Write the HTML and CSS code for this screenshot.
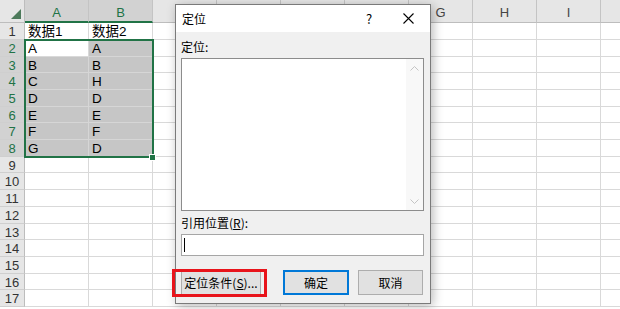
FILE: index.html
```html
<!DOCTYPE html>
<html lang="zh-CN">
<head>
    <meta charset="UTF-8">
    <title>定位</title>
    <link rel="stylesheet" href="styles.css">
</head>
<body>
<div class="wrap">
    <div class="sheet">
        <div class="corner"><span class="tri"></span></div>
        <!-- C-F 被对话框挡住 -->
        <div class="ch on">A</div><div class="ch on">B</div><div class="ch"></div><div class="ch"></div><div class="ch"></div><div class="ch"></div><div class="ch">G</div><div class="ch">H</div><div class="ch">I</div><div class="ch"></div>

        <div class="rh">1</div><div class="c">数据1</div><div class="c">数据2</div><div class="c"></div><div class="c"></div><div class="c"></div><div class="c"></div><div class="c"></div><div class="c"></div><div class="c"></div><div class="c"></div>
        <div class="rh on">2</div><div class="c">A</div><div class="c sel">A</div><div class="c"></div><div class="c"></div><div class="c"></div><div class="c"></div><div class="c"></div><div class="c"></div><div class="c"></div><div class="c"></div>
        <div class="rh on">3</div><div class="c sel">B</div><div class="c sel">B</div><div class="c"></div><div class="c"></div><div class="c"></div><div class="c"></div><div class="c"></div><div class="c"></div><div class="c"></div><div class="c"></div>
        <div class="rh on">4</div><div class="c sel">C</div><div class="c sel">H</div><div class="c"></div><div class="c"></div><div class="c"></div><div class="c"></div><div class="c"></div><div class="c"></div><div class="c"></div><div class="c"></div>
        <div class="rh on">5</div><div class="c sel">D</div><div class="c sel">D</div><div class="c"></div><div class="c"></div><div class="c"></div><div class="c"></div><div class="c"></div><div class="c"></div><div class="c"></div><div class="c"></div>
        <div class="rh on">6</div><div class="c sel">E</div><div class="c sel">E</div><div class="c"></div><div class="c"></div><div class="c"></div><div class="c"></div><div class="c"></div><div class="c"></div><div class="c"></div><div class="c"></div>
        <div class="rh on">7</div><div class="c sel">F</div><div class="c sel">F</div><div class="c"></div><div class="c"></div><div class="c"></div><div class="c"></div><div class="c"></div><div class="c"></div><div class="c"></div><div class="c"></div>
        <div class="rh on">8</div><div class="c sel">G</div><div class="c sel">D</div><div class="c"></div><div class="c"></div><div class="c"></div><div class="c"></div><div class="c"></div><div class="c"></div><div class="c"></div><div class="c"></div>
        <div class="rh">9</div><div class="c"></div><div class="c"></div><div class="c"></div><div class="c"></div><div class="c"></div><div class="c"></div><div class="c"></div><div class="c"></div><div class="c"></div><div class="c"></div>
        <div class="rh">10</div><div class="c"></div><div class="c"></div><div class="c"></div><div class="c"></div><div class="c"></div><div class="c"></div><div class="c"></div><div class="c"></div><div class="c"></div><div class="c"></div>
        <div class="rh">11</div><div class="c"></div><div class="c"></div><div class="c"></div><div class="c"></div><div class="c"></div><div class="c"></div><div class="c"></div><div class="c"></div><div class="c"></div><div class="c"></div>
        <div class="rh">12</div><div class="c"></div><div class="c"></div><div class="c"></div><div class="c"></div><div class="c"></div><div class="c"></div><div class="c"></div><div class="c"></div><div class="c"></div><div class="c"></div>
        <div class="rh">13</div><div class="c"></div><div class="c"></div><div class="c"></div><div class="c"></div><div class="c"></div><div class="c"></div><div class="c"></div><div class="c"></div><div class="c"></div><div class="c"></div>
        <div class="rh">14</div><div class="c"></div><div class="c"></div><div class="c"></div><div class="c"></div><div class="c"></div><div class="c"></div><div class="c"></div><div class="c"></div><div class="c"></div><div class="c"></div>
        <div class="rh">15</div><div class="c"></div><div class="c"></div><div class="c"></div><div class="c"></div><div class="c"></div><div class="c"></div><div class="c"></div><div class="c"></div><div class="c"></div><div class="c"></div>
        <div class="rh">16</div><div class="c"></div><div class="c"></div><div class="c"></div><div class="c"></div><div class="c"></div><div class="c"></div><div class="c"></div><div class="c"></div><div class="c"></div><div class="c"></div>
        <div class="rh">17</div><div class="c"></div><div class="c"></div><div class="c"></div><div class="c"></div><div class="c"></div><div class="c"></div><div class="c"></div><div class="c"></div><div class="c"></div><div class="c"></div>
    </div>

    <!-- 选区边框 -->
    <div class="selection"></div>
    <div class="handle"></div>

    <div class="dialog">
        <div class="title">
            <span class="title-text">定位</span>
            <span class="help">?</span>
            <svg class="close" width="11" height="11" viewBox="0 0 11 11">
                <path d="M0.5 0.5 L10.5 10.5 M10.5 0.5 L0.5 10.5" stroke="#000" stroke-width="1.1" fill="none"/>
            </svg>
        </div>
        <div class="body">
            <div class="label">定位:</div>
            <div class="listbox">
                <div class="scroll">
                    <svg width="9" height="5" viewBox="0 0 9 5"><path d="M0.5 4.5 L4.5 0.5 L8.5 4.5" stroke="#c4c4c4" fill="none"/></svg>
                    <svg width="9" height="5" viewBox="0 0 9 5"><path d="M0.5 0.5 L4.5 4.5 L8.5 0.5" stroke="#c4c4c4" fill="none"/></svg>
                </div>
            </div>
            <div class="label ref">引用位置(<u>R</u>):</div>
            <div class="input"><span class="caret"></span></div>
            <div class="btns">
                <div class="btn btn-cond">定位条件(<u>S</u>)...</div>
                <div class="btn btn-ok">确定</div>
                <div class="btn btn-cancel">取消</div>
            </div>
        </div>
        <div class="mark"></div>
    </div>
</div>
</body>
</html>
```
FILE: styles.css
```css
html,body{
    margin:0;
    padding:0;
    height:100%;
    overflow:hidden;
    background:#fff;
}
.wrap{
    position:relative;
    width:620px;
    height:309px;
    overflow:hidden;
}
.sheet{
    display:grid;
    grid-template-columns:25px repeat(10, 64px);
    grid-template-rows:23.3px;
    grid-auto-rows:16.7px;
    font-family:"Liberation Sans","Noto Sans CJK SC",sans-serif;
    font-size:13.5px;
    color:#000;
}
.sheet > div{
    box-sizing:border-box;
    border-right:1px solid #d9d9d9;
    border-bottom:1px solid #d9d9d9;
    white-space:nowrap;
}
.sheet .corner{
    background:#e6e6e6;
    border-color:#bdbdbd;
    position:relative;
}
.corner .tri{
    position:absolute;
    right:3px;
    bottom:3px;
    width:0;
    height:0;
    border-left:10px solid transparent;
    border-bottom:10px solid #4d7a5b;
}
.sheet .ch{
    background:#e6e6e6;
    border-right-color:#c4c4c4;
    border-bottom-color:#bdbdbd;
    color:#444;
    font-size:13px;
    text-align:center;
    padding-top:4px;
    line-height:18px;
}
.sheet .ch.on{
    background:#d2d2d2;
    color:#217346;
    border-bottom:2px solid #217346;
}
.sheet .rh{
    background:#e6e6e6;
    border-right-color:#bdbdbd;
    border-bottom-color:#cfcfcf;
    color:#333;
    font-size:13px;
    text-align:center;
    padding-top:1px;
    line-height:15.5px;
}
.sheet .rh.on{
    background:#d2d2d2;
    color:#217346;
}
.sheet .c{
    padding-left:3px;
    padding-top:1px;
    line-height:15.5px;
}
.sheet .c.sel{
    background:#c6c6c6;
    border-color:#d6d6d6;
}
.selection{
    position:absolute;
    left:24px;
    top:39px;
    width:130px;
    height:119px;
    box-sizing:border-box;
    border:2px solid #217346;
}
.handle{
    position:absolute;
    left:149px;
    top:154px;
    width:5px;
    height:5px;
    background:#217346;
    border:1px solid #fff;
}

/* 对话框 */
.dialog{
    position:absolute;
    left:175px;
    top:4px;
    width:256px;
    height:300px;
    box-sizing:border-box;
    border:1px solid #7a7a7a;
    background:#f0f0f0;
    box-shadow:2px 2px 10px rgba(0,0,0,0.28);
    font-family:"Noto Sans CJK SC","Noto Sans",sans-serif;
    font-size:12px;
    color:#000;
}
.title{
    height:27px;
    background:#fff;
    display:flex;
    align-items:center;
    padding-left:6px;
}
.title .help{
    margin-left:auto;
    width:10px;
    text-align:center;
    font-size:13px;
}
.title .close{
    margin-left:29px;
    margin-right:16px;
}
.body{
    padding:7px 6px 8px 5px;
}
.label{
    height:16px;
    line-height:16px;
}
.label.ref{
    margin-top:4px;
}
.listbox{
    margin-top:3px;
    height:153px;
    box-sizing:border-box;
    border:1px solid #8c8c8c;
    background:#fff;
    display:flex;
    justify-content:flex-end;
}
.scroll{
    width:17px;
    background:#f8f8f8;
    display:flex;
    flex-direction:column;
    justify-content:space-between;
    align-items:center;
    padding:7px 0 6px;
}
.scroll svg{
    display:block;
}
.input{
    margin-top:3px;
    height:22px;
    box-sizing:border-box;
    border:1px solid #a6a6a6;
    background:#fff;
    display:flex;
    align-items:center;
}
.caret{
    display:block;
    width:1px;
    height:14px;
    margin-left:2px;
    background:#000;
}
.btns{
    margin-top:14px;
    display:flex;
}
.btn{
    height:25px;
    box-sizing:border-box;
    border:1px solid #adadad;
    background:#e1e1e1;
    display:flex;
    align-items:center;
    justify-content:center;
}
.btn-cond{
    width:80px;
}
.btn-ok{
    width:66px;
    margin-left:auto;
    border:2px solid #0078d7;
}
.btn-cancel{
    width:65px;
    margin-left:9px;
    margin-right:1px;
}
.mark{
    position:absolute;
    left:-4px;
    top:264px;
    width:95px;
    height:28px;
    box-sizing:border-box;
    border:3px solid #e8141b;
}
```
